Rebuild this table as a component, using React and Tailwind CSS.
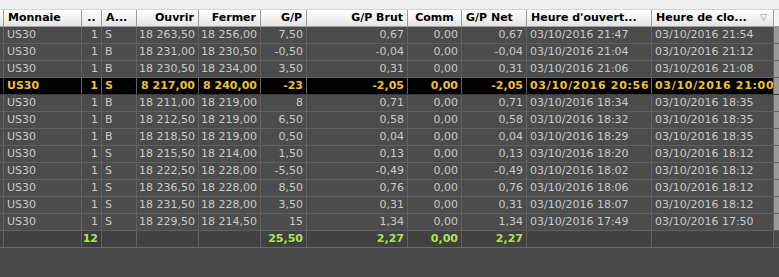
import React from 'react';

const cols = 'grid grid-cols-[4px_78px_20px_35px_62px_62px_46px_101px_54px_65px_125px_122px_5px]';

// alignement par colonne (gauche / droite)
const align = ['l', 'l', 'r', 'l', 'r', 'r', 'r', 'r', 'r', 'r', 'l', 'l', 'l'];

const rows = [
  ['US30', '1', 'S', '18 263,50', '18 256,00', '7,50', '0,67', '0,00', '0,67', '03/10/2016 21:47', '03/10/2016 21:54'],
  ['US30', '1', 'B', '18 231,00', '18 230,50', '-0,50', '-0,04', '0,00', '-0,04', '03/10/2016 21:04', '03/10/2016 21:12'],
  ['US30', '1', 'B', '18 230,50', '18 234,00', '3,50', '0,31', '0,00', '0,31', '03/10/2016 21:06', '03/10/2016 21:08'],
  ['US30', '1', 'S', '8 217,00', '8 240,00', '-23', '-2,05', '0,00', '-2,05', '03/10/2016 20:56', '03/10/2016 21:00'],
  ['US30', '1', 'B', '18 211,00', '18 219,00', '8', '0,71', '0,00', '0,71', '03/10/2016 18:34', '03/10/2016 18:35'],
  ['US30', '1', 'B', '18 212,50', '18 219,00', '6,50', '0,58', '0,00', '0,58', '03/10/2016 18:32', '03/10/2016 18:35'],
  ['US30', '1', 'B', '18 218,50', '18 219,00', '0,50', '0,04', '0,00', '0,04', '03/10/2016 18:29', '03/10/2016 18:35'],
  ['US30', '1', 'S', '18 215,50', '18 214,00', '1,50', '0,13', '0,00', '0,13', '03/10/2016 18:20', '03/10/2016 18:12'],
  ['US30', '1', 'S', '18 222,50', '18 228,00', '-5,50', '-0,49', '0,00', '-0,49', '03/10/2016 18:02', '03/10/2016 18:12'],
  ['US30', '1', 'S', '18 236,50', '18 228,00', '8,50', '0,76', '0,00', '0,76', '03/10/2016 18:06', '03/10/2016 18:12'],
  ['US30', '1', 'S', '18 231,50', '18 228,00', '3,50', '0,31', '0,00', '0,31', '03/10/2016 18:07', '03/10/2016 18:12'],
  ['US30', '1', 'S', '18 229,50', '18 214,50', '15', '1,34', '0,00', '1,34', '03/10/2016 17:49', '03/10/2016 17:50'],
];

const totals = ['', '12', '', '', '', '25,50', '2,27', '0,00', '2,27', '', ''];

const headers = [
  { t: 'Monnaie', a: 'l' },
  { t: '..', a: 'c' },
  { t: 'A...', a: 'l' },
  { t: 'Ouvrir', a: 'r' },
  { t: 'Fermer', a: 'r' },
  { t: 'G/P', a: 'r' },
  { t: 'G/P Brut', a: 'r' },
  { t: 'Comm', a: 'c' },
  { t: 'G/P Net', a: 'l' },
  { t: "Heure d'ouvert...", a: 'l' },
  { t: 'Heure de clo...', a: 'l', sort: true },
];

function Cell({ children, a, className = '' }) {
  const just = a === 'r' ? 'justify-end pr-[3px]' : a === 'c' ? 'justify-center' : 'justify-start pl-[3px]';
  return (
    <div className={`flex items-center overflow-hidden whitespace-nowrap border-r border-[#626262] ${just} ${className}`}>
      {children}
    </div>
  );
}

export default function App() {
  return (
    <div className="w-[779px] h-[277px] bg-[#4a4a4a] overflow-hidden text-[11px] font-['DejaVu_Sans',Verdana,sans-serif]">
      <div className="h-[10px] bg-[#efefef] border-b border-[#d4d4d4]" />

      {/* en-tête */}
      <div className={`${cols} h-[17px] bg-gradient-to-b from-[#ffffff] to-[#e4e4e4] border-b border-[#a0a0a0] text-black font-bold`}>
        <div className="border-r border-[#9a9a9a]" />
        {headers.map((h, i) => (
          <div
            key={i}
            className={`flex items-center overflow-hidden whitespace-nowrap border-r border-[#9a9a9a] ${
              h.a === 'r' ? 'justify-end pr-[4px]' : h.a === 'c' ? 'justify-center' : 'justify-between pl-[4px] pr-[6px]'
            }`}
          >
            <span>{h.t}</span>
            {h.sort && <span className="text-[#8a8a8a] font-normal text-[9px]">▽</span>}
          </div>
        ))}
        <div className="bg-[#f4f4f4]" />
      </div>

      {/* lignes */}
      {rows.map((r, ri) => {
        const hl = ri === 3;
        return (
          <div
            key={ri}
            className={`${cols} h-[17px] border-b ${
              hl ? 'bg-black text-[#f2c22e] font-bold border-[#3a3a3a]' : 'bg-[#4c4c4c] text-[#c9c9c9] border-[#5f5f5f]'
            }`}
          >
            <div className={`border-r ${hl ? 'border-[#3a3a3a]' : 'border-[#626262]'}`} />
            {r.map((v, ci) => (
              <Cell
                key={ci}
                a={align[ci + 1]}
                className={hl ? (ci >= 9 ? 'border-[#3a3a3a] tracking-[0.7px]' : 'border-[#3a3a3a]') : ''}
              >
                {v}
              </Cell>
            ))}
            <div className="bg-[#9a9a9a]" />
          </div>
        );
      })}

      {/* totaux */}
      <div className={`${cols} h-[17px] bg-[#414141] border-b border-[#6a6a6a] text-[#b8e04e] font-bold`}>
        <div className="border-r border-[#626262]" />
        {totals.map((v, ci) => (
          <Cell key={ci} a={align[ci + 1]} className={ci === 1 ? 'bg-[#3a3a44]' : ''}>
            {v}
          </Cell>
        ))}
        <div className="bg-[#4a4a4a]" />
      </div>
    </div>
  );
}
